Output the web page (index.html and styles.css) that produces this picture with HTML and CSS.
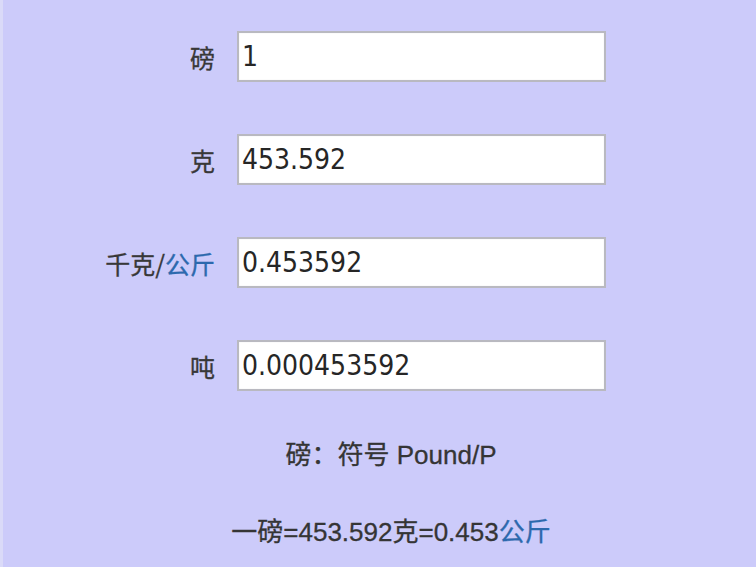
FILE: index.html
```html
<!DOCTYPE html>
<html lang="zh-CN">
<head>
    <meta charset="UTF-8">
    <meta name="viewport" content="width=device-width, initial-scale=1.0">
    <title>磅换算</title>
    <link rel="stylesheet" href="styles.css">
</head>
<body>
    <div class="panel">
        <div class="form">
            <label class="label" for="lb">磅</label>
            <input class="field" id="lb" type="text" value="1">

            <label class="label" for="g">克</label>
            <input class="field" id="g" type="text" value="453.592">

            <label class="label" for="kg">千克/<span class="blue">公斤</span></label>
            <input class="field" id="kg" type="text" value="0.453592">

            <label class="label" for="t">吨</label>
            <input class="field" id="t" type="text" value="0.000453592">
        </div>

        <div class="note">
            <p>磅：符号 Pound/P</p>
            <p>一磅=453.592克=0.453<span class="blue">公斤</span></p>
        </div>
    </div>
</body>
</html>
```

FILE: styles.css
```css
body {
    margin: 0;
    background: #cccbfa;
    font-family: "Liberation Sans", "Noto Sans CJK SC", sans-serif;
    color: #353535;
}

.panel {
    min-height: 567px;
    box-sizing: border-box;
    border-left: 3px solid #dadaf8;
    padding: 31px 0 0 82px;
}

.form {
    display: grid;
    grid-template-columns: 130px 369px;
    column-gap: 22px;
    row-gap: 52px;
    align-items: center;
}

.label {
    text-align: right;
    font-family: "Noto Sans CJK SC", sans-serif;
    font-size: 25px;
    color: #383838;
    -webkit-text-stroke: 0.3px #383838;
}

.blue {
    color: #2c69ad;
    -webkit-text-stroke-color: #2c69ad;
}

.field {
    height: 51px;
    box-sizing: border-box;
    border: 2px solid #b9b9c0;
    box-shadow: inset 0 0 1px #d8d8d8;
    background: #fff;
    padding: 0 3px;
    font-family: "DejaVu Sans Condensed", sans-serif;
    font-size: 28px;
    color: #262626;
    outline: none;
}

.note {
    margin-top: 48px;
    padding-left: 6px;
    text-align: center;
    font-size: 26px;
    width: 600px;
    -webkit-text-stroke: 0.3px #353535;
}

.note .blue {
    -webkit-text-stroke-color: #2c69ad;
}

.note p {
    margin: 0 0 45px;
    line-height: 32px;
}
```
